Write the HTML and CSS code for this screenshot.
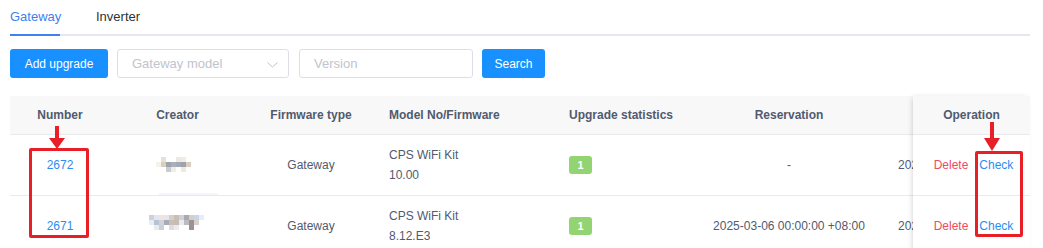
FILE: index.html
```html
<!DOCTYPE html>
<html>
<head>
<meta charset="utf-8">
<link rel="stylesheet" href="styles.css">
</head>
<body>
<div class="page">
  <div class="tabs">
    <div class="tab active">Gateway</div>
    <div class="tab">Inverter</div>
  </div>
  <div class="toolbar">
    <button class="btn">Add upgrade</button>
    <div class="select"><span class="ph">Gateway model</span>
      <svg class="chev" width="11" height="6" viewBox="0 0 11 6"><path d="M0.5 0.5 L5.5 5 L10.5 0.5" fill="none" stroke="#c0c4cc" stroke-width="1"/></svg>
    </div>
    <div class="input"><span class="ph">Version</span></div>
    <button class="btn">Search</button>
  </div>
  <div class="table">
    <div class="scroll">
      <div class="row head">
        <div class="c center">Number</div>
        <div class="c center">Creator</div>
        <div class="c center">Firmware type</div>
        <div class="c left">Model No/Firmware</div>
        <div class="c left">Upgrade statistics</div>
        <div class="c center">Reservation</div>
        <div class="c left pad20"></div>
      </div>
      <div class="row body">
        <div class="c center"><span class="link">2672</span></div>
        <div class="c center creator">
          <div class="mosaic m1">
            <i></i><i class="a1"></i><i></i><i></i><i class="a2"></i><i class="a3"></i><i></i><i></i>
            <i class="a4"></i><i class="a5"></i><i class="b1"></i><i class="b2"></i><i class="b3"></i><i class="b1"></i><i class="a5"></i><i></i>
            <i></i><i></i><i class="b4"></i><i class="a3"></i><i></i><i class="a2"></i><i></i><i></i>
          </div>
          <div class="ghostbar"></div>
        </div>
        <div class="c center">Gateway</div>
        <div class="c left"><div class="two">CPS WiFi Kit<br>10.00</div></div>
        <div class="c left"><span class="badge">1</span></div>
        <div class="c center">-</div>
        <div class="c left pad20"><span class="clip">2025-03-06</span></div>
      </div>
      <div class="row body">
        <div class="c center"><span class="link">2671</span></div>
        <div class="c center creator2">
          <div class="mosaic m2">
            <i class="d1"></i><i class="d2"></i><i class="d3"></i><i class="d2"></i><i class="d4"></i><i class="d5"></i><i class="d1"></i><i class="d6"></i><i class="d4"></i><i class="d7"></i><i class="d8"></i><i></i>
            <i class="d8"></i><i class="d9"></i><i class="d10"></i><i class="d6"></i><i class="d5"></i><i class="d11"></i><i class="d12"></i><i class="d13"></i><i class="d14"></i><i class="d15"></i><i></i><i></i>
            <i></i><i class="d12"></i><i class="d16"></i><i></i><i class="d17"></i><i class="d12"></i><i></i><i></i><i class="d14"></i><i></i><i></i><i></i>
          </div>
        </div>
        <div class="c center">Gateway</div>
        <div class="c left"><div class="two">CPS WiFi Kit<br>8.12.E3</div></div>
        <div class="c left"><span class="badge">1</span></div>
        <div class="c center">2025-03-06 00:00:00 +08:00</div>
        <div class="c left pad20"><span class="clip">2025-03-06</span></div>
      </div>
    </div>
    <div class="fixed">
      <div class="fc head">Operation</div>
      <div class="fc body"><span class="del">Delete</span><span class="link">Check</span></div>
      <div class="fc body"><span class="del">Delete</span><span class="link">Check</span></div>
    </div>
  </div>

  <div class="mark mark-num"></div>
  <svg class="arrow arrow-num" width="18" height="24" viewBox="0 0 18 24"><path d="M7 0 H11 V12 H17 L9 23 L1 12 H7 Z" fill="#e91f27"/></svg>
  <div class="mark mark-chk"></div>
  <svg class="arrow arrow-chk" width="18" height="30" viewBox="0 0 18 30"><path d="M7 0 H11 V16 H17 L9 29 L1 16 H7 Z" fill="#e91f27"/></svg>
</div>
</body>
</html>
```

FILE: styles.css
```css
* { box-sizing: border-box; }
html, body { margin: 0; padding: 0; background: #fff; }
body {
  font-family: "Liberation Sans", Arial, sans-serif;
  font-size: 12px;
  color: #515a6e;
}
.page {
  position: relative;
  width: 1043px;
  height: 248px;
  overflow: hidden;
  padding: 0 13px 0 10px;
}
.tabs {
  display: flex;
  height: 36px;
  border-bottom: 2px solid #e4e7ed;
}
.tab {
  height: 36px;
  line-height: 34px;
  font-size: 13px;
  color: #303133;
  margin-right: 36px;
  margin-bottom: -2px;
  border-bottom: 2px solid transparent;
}
.tab.active {
  color: #4080f0;
  border-bottom-color: #4080f0;
  width: 50px;
  margin-right: 36px;
}
.toolbar {
  display: flex;
  align-items: center;
  margin-top: 13px;
  height: 29px;
}
.btn {
  height: 29px;
  border: none;
  border-radius: 3px;
  background: #1890ff;
  color: #fff;
  font-family: "Liberation Sans", Arial, sans-serif;
  font-size: 12px;
  padding: 0 15px;
  margin: 0 9px 0 0;
}
.toolbar .btn:first-child { width: 98px; padding: 0; }
.toolbar .btn:last-child { width: 63px; padding: 0; }
.select, .input {
  height: 29px;
  border: 1px solid #dcdfe6;
  border-radius: 3px;
  display: flex;
  align-items: center;
  padding: 0 14px;
}
.select { width: 172px; margin-right: 10px; justify-content: space-between; padding-right: 10px; }
.input { width: 174px; margin-right: 9px; }
.ph { color: #c0c4cc; font-size: 13px; }
.chev { margin-top: 2px; }

.table {
  display: flex;
  margin-top: 18px;
}
.scroll {
  flex: 1;
  overflow: hidden;
  min-width: 0;
}
.row {
  display: grid;
  grid-template-columns: 100px 135px 132px 180px 143px 178px 35px;
  width: 903px;
  border-bottom: 1px solid #e8eaec;
}
.row.head { height: 39px; background: #f8f8f9; font-weight: bold; }
.row.body { height: 61px; }
.c {
  display: flex;
  align-items: center;
  white-space: nowrap;
  overflow: hidden;
}
.c.center { justify-content: center; }
.c.left { padding-left: 12px; }
.c.pad20 { padding-left: 20px; }
.clip { display: block; width: 15px; overflow: hidden; }
.two { line-height: 20px; }
.link { color: #2d8cf0; }
.badge {
  display: inline-block;
  width: 23px;
  height: 18px;
  line-height: 18px;
  text-align: center;
  border-radius: 3px;
  background: #92d471;
  color: #fff;
  font-weight: bold;
  font-size: 11px;
}
.creator { flex-direction: column; justify-content: flex-end; }
.creator .mosaic { margin: auto 0 auto -4px; }
.ghostbar {
  width: 59px;
  height: 5px;
  background: #f3f6fa;
  margin: 0 0 -3px 22px;
}
.creator2 { align-items: flex-start; padding-top: 19px; padding-left: 3px; }
.mosaic { display: grid; grid-auto-rows: 5px; }
.mosaic i { display: block; }
.m1 { grid-template-columns: repeat(8, 5px); }
.m2 { grid-template-columns: repeat(12, 5px); }
.a1 { background: #e6e0d5; }
.a2 { background: #efe9e1; }
.a3 { background: #f1ece5; }
.a4 { background: #f6f1ea; }
.a5 { background: #d9cfc1; }
.b1 { background: #9ea3ae; }
.b2 { background: #aab0ba; }
.b3 { background: #a3aab6; }
.b4 { background: #c9ccd3; }
.d1 { background: #ccd1dc; }
.d2 { background: #e3e6ee; }
.d3 { background: #f6e3d6; }
.d4 { background: #d4cfc7; }
.d5 { background: #c9bfb4; }
.d6 { background: #a9a9b0; }
.d7 { background: #c9d6e9; }
.d8 { background: #e3eef9; }
.d9 { background: #b8c3d2; }
.d10 { background: #cdd4de; }
.d11 { background: #c5bdb4; }
.d12 { background: #e9ebee; }
.d13 { background: #bcbcc0; }
.d14 { background: #9c9293; }
.d15 { background: #d8d1cb; }
.d16 { background: #ccd0d6; }
.d17 { background: #dadde4; }

.fixed {
  width: 117px;
  flex: none;
  box-shadow: -2px 0 6px -2px rgba(0, 0, 0, 0.2);
  background: #fff;
  position: relative;
}
.fc {
  display: flex;
  align-items: center;
  justify-content: center;
  border-bottom: 1px solid #e8eaec;
  gap: 11px;
}
.fc.head { height: 39px; background: #f8f8f9; font-weight: bold; }
.fc.body { height: 61px; padding-left: 4px; }
.del { color: #ef4a62; }

.mark {
  position: absolute;
  border: 3px solid #e91f27;
  border-radius: 2px;
}
.mark-num { left: 29px; top: 148px; width: 60px; height: 90px; }
.mark-chk { left: 975px; top: 151px; width: 48px; height: 86px; }
.arrow { position: absolute; }
.arrow-num { left: 48px; top: 126px; }
.arrow-chk { left: 983px; top: 122px; }
```
